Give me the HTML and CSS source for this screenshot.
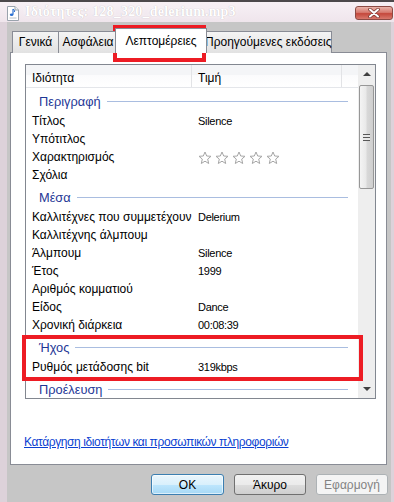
FILE: index.html
```html
<!DOCTYPE html>
<html lang="el">
<head>
  <meta charset="UTF-8">
  <meta name="viewport" content="width=device-width, initial-scale=1.0">
  <title>Ιδιότητες: 128_320_delerium.mp3</title>
  <link rel="stylesheet" href="styles.css">
</head>
<body>
  <div class="window">
    <div class="titlebar">
      <svg class="file-icon" width="12" height="15" viewBox="0 0 12 15">
        <path d="M0.5 0.5 H8 L11.5 4 V14.5 H0.5 Z" fill="#ffffff" stroke="#9aa3ad"/>
        <path d="M8 0.5 V4 H11.5" fill="#eef1f4" stroke="#9aa3ad"/>
        <path d="M6 3 V8.5" stroke="#2a6fd0" stroke-width="1.2"/>
        <ellipse cx="4.6" cy="8.8" rx="1.8" ry="1.3" fill="#2a6fd0"/>
        <path d="M6 3 Q8 4 7.6 6" stroke="#2a6fd0" stroke-width="1" fill="none"/>
        <path d="M2.5 12 H9.5" stroke="#b8c0c8" stroke-width="1"/>
      </svg>
      <span class="title">Ιδιότητες: 128_320_delerium.mp3</span>
      <div class="close-btn">
        <svg width="14" height="10" viewBox="0 0 14 10">
          <path d="M3 1.5 L11 8.5 M11 1.5 L3 8.5" stroke="#7a3a34" stroke-width="3.6" stroke-linecap="round"/>
          <path d="M3 1.5 L11 8.5 M11 1.5 L3 8.5" stroke="#ffffff" stroke-width="2" stroke-linecap="round"/>
        </svg>
      </div>
    </div>

    <div class="client">
      <div class="tabs">
        <div class="tab tab-general">Γενικά</div>
        <div class="tab tab-security">Ασφάλεια</div>
        <div class="tab tab-details active">Λεπτομέρειες</div>
        <div class="tab tab-versions">Προηγούμενες εκδόσεις</div>
      </div>

      <div class="panel">
        <div class="list">
          <div class="list-main">
            <div class="list-header">
              <div class="col-name">Ιδιότητα</div>
              <div class="col-value">Τιμή</div>
              <div class="col-rest"></div>
            </div>

            <div class="group"><span>Περιγραφή</span><i class="group-line"></i></div>
            <div class="row"><span class="name">Τίτλος</span><span class="value">Silence</span></div>
            <div class="row"><span class="name">Υπότιτλος</span><span class="value"></span></div>
            <div class="row">
              <span class="name">Χαρακτηρισμός</span>
              <span class="value stars">
                <svg class="star" viewBox="0 0 14 14"><path d="M7 1 L8.7 5 L13 5.3 L9.7 8.1 L10.7 12.5 L7 10.2 L3.3 12.5 L4.3 8.1 L1 5.3 L5.3 5 Z"/></svg>
                <svg class="star" viewBox="0 0 14 14"><path d="M7 1 L8.7 5 L13 5.3 L9.7 8.1 L10.7 12.5 L7 10.2 L3.3 12.5 L4.3 8.1 L1 5.3 L5.3 5 Z"/></svg>
                <svg class="star" viewBox="0 0 14 14"><path d="M7 1 L8.7 5 L13 5.3 L9.7 8.1 L10.7 12.5 L7 10.2 L3.3 12.5 L4.3 8.1 L1 5.3 L5.3 5 Z"/></svg>
                <svg class="star" viewBox="0 0 14 14"><path d="M7 1 L8.7 5 L13 5.3 L9.7 8.1 L10.7 12.5 L7 10.2 L3.3 12.5 L4.3 8.1 L1 5.3 L5.3 5 Z"/></svg>
                <svg class="star" viewBox="0 0 14 14"><path d="M7 1 L8.7 5 L13 5.3 L9.7 8.1 L10.7 12.5 L7 10.2 L3.3 12.5 L4.3 8.1 L1 5.3 L5.3 5 Z"/></svg>
              </span>
            </div>
            <div class="row"><span class="name">Σχόλια</span><span class="value"></span></div>

            <div class="group"><span>Μέσα</span><i class="group-line"></i></div>
            <div class="row"><span class="name">Καλλιτέχνες που συμμετέχουν</span><span class="value">Delerium</span></div>
            <div class="row"><span class="name">Καλλιτέχνης άλμπουμ</span><span class="value"></span></div>
            <div class="row"><span class="name">Άλμπουμ</span><span class="value">Silence</span></div>
            <div class="row"><span class="name">Έτος</span><span class="value">1999</span></div>
            <div class="row"><span class="name">Αριθμός κομματιού</span><span class="value"></span></div>
            <div class="row"><span class="name">Είδος</span><span class="value">Dance</span></div>
            <div class="row"><span class="name">Χρονική διάρκεια</span><span class="value">00:08:39</span></div>

            <div class="group"><span>Ήχος</span><i class="group-line"></i></div>
            <div class="row"><span class="name">Ρυθμός μετάδοσης bit</span><span class="value">319kbps</span></div>

            <div class="group"><span>Προέλευση</span><i class="group-line"></i></div>
          </div>

          <div class="scrollbar">
            <div class="sb-arrow sb-up"><i></i></div>
            <div class="sb-thumb"><i class="sb-grip"></i></div>
            <div class="sb-track"></div>
            <div class="sb-arrow sb-down"><i></i></div>
          </div>
        </div>

        <a href="#" class="remove-link">Κατάργηση ιδιοτήτων και προσωπικών πληροφοριών</a>
      </div>

      <div class="buttons">
        <button class="btn btn-ok">OK</button>
        <button class="btn btn-cancel">Άκυρο</button>
        <button class="btn btn-apply" disabled>Εφαρμογή</button>
      </div>
    </div>

    <div class="mark mark-tab"></div>
    <div class="mark mark-audio"></div>
  </div>
</body>
</html>
```

FILE: styles.css
```css
body {
  margin: 0;
  width: 394px;
  height: 502px;
  overflow: hidden;
  font-family: "Liberation Sans", Arial, sans-serif;
  font-size: 12px;
  color: #000000;
  background-color: #c6c6c6;
}
.window {
  position: relative;
  width: 394px;
  height: 502px;
  background-color: #ddd2da;
  display: flex;
  flex-direction: column;
}

/* title bar */
.titlebar {
  height: 20px;
  border-top: 2px solid #4c484b;
  background: linear-gradient(#f7f0f5, #efe5ec);
  display: flex;
  align-items: center;
  padding-left: 7px;
}
.file-icon {
  flex: none;
  margin-top: 2px;
}
.title {
  margin-left: 6px;
  font-family: "Liberation Serif", serif;
  font-weight: 700;
  font-size: 14px;
  color: #ffffff;
  text-shadow: 0 0 1px rgba(120, 100, 115, 0.5), 0 0 4px rgba(255, 255, 255, 0.9);
  letter-spacing: 0.2px;
}
.close-btn {
  margin-left: auto;
  margin-right: 1px;
  align-self: flex-start;
  margin-top: 4px;
  width: 36px;
  height: 12px;
  border: 1px solid #8c4a44;
  border-radius: 3px;
  background: linear-gradient(#eab3aa 0%, #d77b70 45%, #c4483c 55%, #d8786c 100%);
  display: flex;
  justify-content: center;
  align-items: center;
}

/* client area */
.client {
  flex: 1;
  margin: 0 3px 0 7px;
  background-color: #c6c6c6;
  display: flex;
  flex-direction: column;
  padding-top: 6px;
}
.tabs {
  display: flex;
  align-items: flex-start;
  padding-left: 5px;
  height: 25px;
  margin-bottom: -1px;
  position: relative;
  z-index: 1;
}
.tab {
  box-sizing: border-box;
  height: 22px;
  margin-top: 3px;
  margin-right: -1px;
  border: 1px solid #898c95;
  border-bottom: none;
  background: linear-gradient(#f4f4f4, #e2e2e2);
  text-align: center;
  line-height: 20px;
  font-size: 12px;
  white-space: nowrap;
}
.tab-general { width: 47px; }
.tab-security { width: 60px; }
.tab-versions { width: 128px; }
.tab.active {
  width: 92px;
  height: 25px;
  margin-top: 0;
  margin-left: -2px;
  margin-right: -3px;
  background: #ffffff;
  line-height: 24px;
  position: relative;
}

.panel {
  box-sizing: border-box;
  height: 413px;
  margin: 0 4px 0 3px;
  border: 1px solid #898c95;
  background-color: #ffffff;
  padding: 11px 0 0 14px;
}

/* property list */
.list {
  box-sizing: border-box;
  width: 351px;
  height: 335px;
  border: 1px solid #828790;
  display: flex;
  overflow: hidden;
}
.list-main {
  flex: 1;
  min-width: 0;
}
.list-header {
  display: flex;
  height: 23px;
  background: linear-gradient(#f4f5f7 0%, #f4f5f7 45%, #fbfbfc 46%, #ffffff 100%);
  border-bottom: 1px solid #e4e6ea;
  box-sizing: border-box;
}
.list-header div {
  box-sizing: border-box;
  padding: 6px 0 0 6px;
  border-right: 1px solid #e2e3e6;
}
.list-header .col-name { width: 166px; }
.list-header .col-value { width: 150px; }
.list-header .col-rest { flex: 1; border-right: none; }

.row {
  display: flex;
  height: 18px;
  line-height: 18px;
  white-space: nowrap;
}
.name {
  width: 166px;
  padding-left: 6px;
  box-sizing: border-box;
}
.value {
  padding-left: 6px;
  font-size: 11px;
  letter-spacing: -0.3px;
}
.stars {
  display: flex;
  gap: 3px;
  align-items: center;
  padding-top: 1px;
}
.star {
  width: 14px;
  height: 14px;
  fill: #ffffff;
  stroke: #a6a6a6;
  stroke-width: 1;
}
.group {
  display: flex;
  align-items: center;
  height: 24px;
  padding: 3px 0 0 13px;
  box-sizing: border-box;
  color: #1e3796;
  font-size: 12.8px;
  white-space: nowrap;
}
.group-line {
  flex: 1;
  height: 1px;
  margin: 0 10px 0 6px;
  background-color: #a9bde0;
}

/* scrollbar */
.scrollbar {
  width: 17px;
  flex: none;
  background-color: #eeeeee;
  display: flex;
  flex-direction: column;
  align-items: center;
}
.sb-arrow {
  height: 18px;
  width: 17px;
  display: flex;
  justify-content: center;
  align-items: center;
}
.sb-arrow i {
  width: 0;
  height: 0;
  border-left: 4px solid transparent;
  border-right: 4px solid transparent;
}
.sb-up i { border-bottom: 4px solid #3f3f3f; }
.sb-down i { border-top: 4px solid #3f3f3f; }
.sb-thumb {
  box-sizing: border-box;
  width: 15px;
  height: 104px;
  margin-top: 2px;
  border: 1px solid #979797;
  border-radius: 2px;
  background: linear-gradient(90deg, #f4f4f4 0%, #e9e9e9 45%, #d8d8d8 55%, #cfcfcf 100%);
  display: flex;
  justify-content: center;
  align-items: center;
}
.sb-grip {
  width: 7px;
  height: 7px;
  background: repeating-linear-gradient(#585858 0, #585858 1px, #e8e8e8 1px, #e8e8e8 3px);
}
.sb-track { flex: 1; }

.remove-link {
  display: inline-block;
  margin: 36px 0 0 -1px;
  color: #0b3fd1;
  text-decoration: underline;
  line-height: 15px;
  letter-spacing: -0.4px;
}

/* dialog buttons */
.buttons {
  display: flex;
  justify-content: flex-end;
  margin-top: 9px;
  padding-right: 3px;
}
.btn {
  box-sizing: border-box;
  width: 72px;
  height: 21px;
  margin-left: 10px;
  border: 1px solid #707070;
  border-radius: 3px;
  background: linear-gradient(#f2f2f2 0%, #ebebeb 50%, #dddddd 51%, #cfcfcf 100%);
  font-family: "Liberation Sans", Arial, sans-serif;
  font-size: 12px;
  color: #000000;
  padding: 0;
}
.btn-ok {
  width: 73px;
  margin-left: 0;
  border-color: #3c7fb1;
  background: linear-gradient(#eaf6fd 0%, #d9f0fc 50%, #bee6fd 51%, #a7d9f5 100%);
  box-shadow: inset 0 0 0 1px rgba(255, 255, 255, 0.6);
}
.btn-apply:disabled {
  border-color: #adb2b5;
  background: #f4f4f4;
  color: #838383;
}

/* red annotation frames */
.mark {
  position: absolute;
  border: 4px solid #ed1c24;
  box-sizing: border-box;
}
.mark-tab {
  left: 113px;
  top: 25px;
  width: 93px;
  height: 37px;
}
.mark-audio {
  left: 22px;
  top: 335px;
  width: 341px;
  height: 46px;
}
```
